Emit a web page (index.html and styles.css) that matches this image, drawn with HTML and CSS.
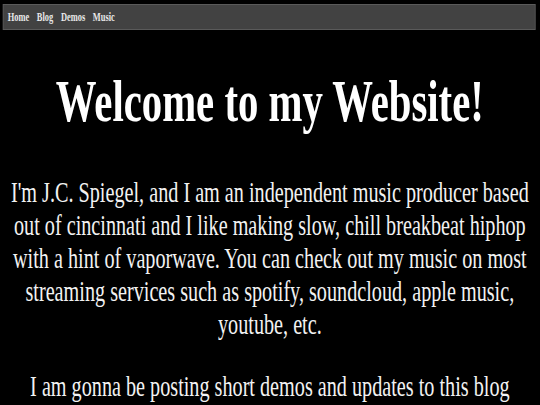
FILE: index.html
```html
<!DOCTYPE html>
<html lang="en">
<head>
<meta charset="utf-8">
<title>J.C. Spiegel</title>
<link rel="stylesheet" href="styles.css">
</head>
<body>
<div class="page">
  <nav class="nav">
    <a href="#">Home</a>
    <a href="#">Blog</a>
    <a href="#">Demos</a>
    <a href="#">Music</a>
  </nav>
  <h1 class="title">Welcome to my Website!</h1>
  <p class="intro">I'm J.C. Spiegel, and I am an independent music producer based out of cincinnati and I like making slow, chill breakbeat hiphop with a hint of vaporwave. You can check out my music on most streaming services such as spotify, soundcloud, apple music, youtube, etc.</p>
  <p class="intro next">I am gonna be posting short demos and updates to this blog</p>
</div>
</body>
</html>
```

FILE: styles.css
```css
html, body {
  margin: 0;
  padding: 0;
  background: #000;
  overflow: hidden;
  height: 100%;
}

.page {
  width: 771px;
  padding-top: 4px;
  transform: scaleX(0.7);
  transform-origin: 0 0;
  font-family: "Liberation Serif", "Times New Roman", serif;
  color: #fff;
}

.nav {
  margin: 0 6px 0 4px;
  height: 24px;
  background: #424242;
  border: 1px solid #5a5a5a;
  display: flex;
  align-items: center;
  gap: 11px;
  padding-left: 6px;
}

.nav a {
  color: #e8e8e8;
  font-weight: bold;
  font-size: 12px;
  text-decoration: none;
}

.title {
  margin: 40px 0 0;
  font-size: 58.2px;
  line-height: 64px;
  font-weight: bold;
  text-align: center;
}

.intro {
  margin: 41.5px 0 0;
  font-size: 28.85px;
  line-height: normal;
  text-align: center;
  color: #f2f2f2;
}

.intro.next {
  margin-top: 29px;
}
```
